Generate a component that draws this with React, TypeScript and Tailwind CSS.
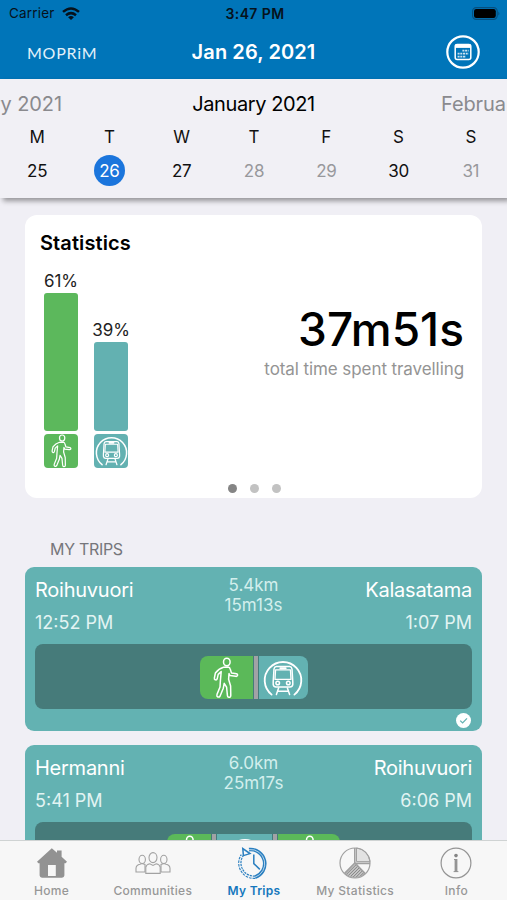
import { useState } from "react";
import clsx from "clsx";

const days = [
  { letter: "M", date: 25, active: true },
  { letter: "T", date: 26, active: true },
  { letter: "W", date: 27, active: true },
  { letter: "T", date: 28, active: false },
  { letter: "F", date: 29, active: false },
  { letter: "S", date: 30, active: true },
  { letter: "S", date: 31, active: false },
];

const stats = [
  { mode: "walk", percent: 61, height: 138 },
  { mode: "metro", percent: 39, height: 89 },
];

const trips = [
  {
    id: 1,
    from: "Roihuvuori",
    to: "Kalasatama",
    start: "12:52 PM",
    end: "1:07 PM",
    distance: "5.4km",
    duration: "15m13s",
    legs: [
      { mode: "walk", width: 53 },
      { mode: "metro", width: 49 },
    ],
  },
  {
    id: 2,
    from: "Hermanni",
    to: "Roihuvuori",
    start: "5:41 PM",
    end: "6:06 PM",
    distance: "6.0km",
    duration: "25m17s",
    legs: [
      { mode: "walk", width: 44 },
      { mode: "metro", width: 55 },
      { mode: "walk", width: 62 },
    ],
  },
];

function WalkIcon({ className }: { className?: string }) {
  return (
    <svg viewBox="0 0 26 42" className={className} fill="none" stroke="white" strokeWidth="1.5" strokeLinejoin="round" strokeLinecap="round">
      <ellipse cx="13.8" cy="5" rx="3.3" ry="3.8" />
      <path d="M10.5 10.2 L15 10 Q16.8 10.2 17.2 12 L18.5 16 L23.6 16.8 Q25 17.3 24.4 18.7 Q23.8 19.6 22.6 19.3 L17 18.6 L16 16.6 L15.6 22.2 L17.6 29 L17.8 38.5 Q17.6 40.6 15.8 40.3 Q14.4 40 14.4 38.4 L13.6 30.2 L11.2 26.4 L10.3 31.2 L7 39.2 Q6 40.6 4.6 39.8 Q3.4 39 4 37.4 L7 30 L7.4 23.6 L8.2 14.6 L5.2 17.4 L4.2 21.8 Q3.6 23.4 2.2 22.7 Q1.1 22.2 1.4 20.8 L2.4 16 Q5.6 11.6 10.5 10.2 Z" />
    </svg>
  );
}

function MetroIcon({ className }: { className?: string }) {
  return (
    <svg viewBox="0 0 40 36" className={className} fill="none" stroke="white" strokeWidth="1.5" strokeLinejoin="round" strokeLinecap="round">
      <path d="M8.6 34.6 A18.3 18.3 0 1 1 31.4 34.6" strokeWidth="1.8" />
      <path d="M13.2 6.6 H26.8 Q28.7 6.8 29 9 L29.8 22 V24.6 Q29.4 27 27 27 H13 Q10.6 27 10.2 24.6 V22 L11 9 Q11.3 6.8 13.2 6.6 Z" />
      <path d="M12.6 9.8 H27.4 L28 19.4 H12 Z" strokeWidth="1.3" />
      <path d="M17.4 8.2 H22.6" strokeWidth="2" />
      <circle cx="14.7" cy="23" r="1.8" />
      <circle cx="25.3" cy="23" r="1.8" />
      <path d="M15.6 28 L13.4 34.6 M24.4 28 L26.6 34.6 M15 31.2 H25" />
    </svg>
  );
}

function ModeIcon({ mode, small }: { mode: string; small?: boolean }) {
  if (mode === "walk") return <WalkIcon className={small ? "w-[21px] h-[34px]" : "w-[26px] h-[42px]"} />;
  return <MetroIcon className={small ? "w-[33px] h-[30px]" : "w-10 h-9"} />;
}

function StatusBar() {
  return (
    <div className="h-[27px] grid grid-cols-3 items-center pl-[9px] pr-[6px] text-[13.5px] text-[#06121c]">
      <div className="flex items-center gap-[7px]">
        <span className="tracking-[0.2px]">Carrier</span>
        <svg viewBox="0 0 18 13" className="w-[18px] h-[13px]" fill="none" stroke="#06121c" strokeWidth="2.5">
          <path d="M1 4.9 Q9 -2 17 4.9" />
          <path d="M4 8.2 Q9 4 14 8.2" />
          <path d="M9 13 L6.1 10.2 Q9 7.8 11.9 10.2 Z" fill="#06121c" stroke="none" />
        </svg>
      </div>
      <div className="text-center font-semibold text-[14px] tracking-[0.4px] whitespace-nowrap">3:47 PM</div>
      <svg viewBox="0 0 29 13" className="w-[29px] h-[13px] justify-self-end">
        <rect x="0.6" y="0.6" width="24.6" height="11.8" rx="3.6" fill="none" stroke="#064f7e" strokeWidth="1.1" />
        <rect x="2" y="2" width="21.8" height="9" rx="2.2" fill="#000" />
        <path d="M26.4 4.4 Q28.4 6.5 26.4 8.6 Z" fill="#064f7e" />
      </svg>
    </div>
  );
}

function Header() {
  return (
    <header className="h-[79px] shrink-0 bg-[#0075b9]">
      <StatusBar />
      <div className="h-[49px] grid grid-cols-3 items-center pl-[27px] pr-[27px] text-white">
        <div className="font-[Lato] text-[16px] tracking-[0.75px] leading-none pt-[3px] text-[#e3f1fa]">MOPRiM</div>
        <h1 className="text-center text-[20px] font-semibold whitespace-nowrap tracking-[0.1px] pt-px">Jan 26, 2021</h1>
        <svg viewBox="0 0 34 34" className="w-[34px] h-[34px] justify-self-end" fill="none" stroke="white">
          <circle cx="17" cy="17" r="15.7" strokeWidth="2.2" />
          <rect x="9.2" y="9.6" width="15.6" height="15" rx="2" strokeWidth="1.5" />
          <path d="M9 11.2 H25" strokeWidth="3.4" />
          <path d="M16.4 15.6 H22.6 M11.6 18.6 H22.6 M11.6 21.6 H20" strokeWidth="1.9" strokeDasharray="2 0.7" opacity="0.8" />
        </svg>
      </div>
    </header>
  );
}

function WeekCalendar({ selected, onSelect }: { selected: number; onSelect: (date: number) => void }) {
  return (
    <section className="relative z-10 h-[119px] shrink-0 bg-[#f1f0f5] shadow-[3px_3px_5px_rgba(0,0,0,0.38)]">
      <div className="h-[46px] pt-[4px] flex items-center justify-between overflow-hidden whitespace-nowrap text-[20px] tracking-[-0.4px] text-[#8a8a8e]">
        <div className="w-[66px] pr-1 flex justify-end tracking-[-0.1px]"><span>January 2021</span></div>
        <div className="text-black">January 2021</div>
        <div className="w-[66px] tracking-[-0.1px]">February 2021</div>
      </div>
      <div className="grid grid-cols-7 pl-px text-center text-[17px]">
        {days.map((day) => (
          <div key={day.date} className="flex flex-col items-center">
            <span className="h-6 leading-6 text-[#111]">{day.letter}</span>
            <button
              onClick={() => onSelect(day.date)}
              className={clsx(
                "mt-[6px] w-[31px] h-[31px] rounded-full leading-[32px] tracking-[-0.3px]",
                selected === day.date ? "bg-[#1b75dc] text-white" : day.active ? "text-[#111]" : "text-[#98989c]"
              )}
            >
              {day.date}
            </button>
          </div>
        ))}
      </div>
    </section>
  );
}

function Statistics() {
  return (
    <section className="mt-[17px] mx-[25px] w-[457px] h-[283px] shrink-0 rounded-[12px] bg-white flex flex-col">
      <h2 className="pl-[15px] pt-[15px] text-[20px] leading-[26px] font-semibold tracking-[0.1px]">Statistics</h2>
      <div className="flex justify-between h-[212px] pl-[14px] pr-[18px]">
        <div className="flex items-end gap-[6px]">
          {stats.map((s) => (
            <div key={s.mode} className="w-11 flex flex-col items-center">
              <span className="text-[17px] leading-6 tracking-[-0.1px] text-[#222]">{s.percent}%</span>
              <div
                className={clsx("w-[34px] rounded-[3px]", s.mode === "walk" ? "bg-[#5cb85c]" : "bg-[#63b1b1]")}
                style={{ height: s.height }}
              />
              <div className={clsx("mt-[3px] w-[34px] h-[34px] rounded-[4px] flex items-center justify-center", s.mode === "walk" ? "bg-[#5cb85c]" : "bg-[#63b1b1]")}>
                <ModeIcon mode={s.mode} small />
              </div>
            </div>
          ))}
        </div>
        <div className="pt-[46px] text-right">
          <div className="text-[46px] leading-[54px] font-medium">37m51s</div>
          <div className="mt-[2px] text-[17px] leading-[22px] tracking-[-0.08px] text-[#949494]">total time spent travelling</div>
        </div>
      </div>
      <div className="mt-[16px] pl-[2px] flex justify-center gap-[13px]">
        <span className="w-[9px] h-[9px] rounded-full bg-[#858585]" />
        <span className="w-[9px] h-[9px] rounded-full bg-[#c2c2c2]" />
        <span className="w-[9px] h-[9px] rounded-full bg-[#c2c2c2]" />
      </div>
    </section>
  );
}

function TripCard({ trip }: { trip: (typeof trips)[number] }) {
  return (
    <article className="h-[164px] shrink-0 rounded-[9px] bg-[#63b2b2] px-[10px]">
      <div className="h-[77px] grid grid-cols-3 text-[#e2f4f3]">
        <div className="pt-[9px]">
          <div className="text-[20px] leading-[28px] tracking-[-0.25px] text-white">{trip.from}</div>
          <div className="mt-[6px] text-[18px] leading-[26px]">{trip.start}</div>
        </div>
        <div className="pt-2 text-center text-[17px] leading-[20px] text-[#d3efed]">
          <div>{trip.distance}</div>
          <div>{trip.duration}</div>
        </div>
        <div className="pt-[9px] text-right">
          <div className="text-[20px] leading-[28px] tracking-[-0.25px] text-white">{trip.to}</div>
          <div className="mt-[6px] text-[18px] leading-[26px]">{trip.end}</div>
        </div>
      </div>
      <div className="h-[65px] rounded-[8px] bg-[#467b7a] flex items-center justify-center pt-[2px]">
        <div className="flex h-[43px] rounded-[8px] overflow-hidden">
          {trip.legs.map((leg, i) => (
            <div key={i} className="flex">
              {i > 0 && <div className="w-1 mx-[1px] bg-[#a2a2a5]" />}
              <div
                className={clsx("flex items-center justify-center overflow-hidden", leg.mode === "walk" ? "bg-[#5bb959]" : "bg-[#63b2b2]")}
                style={{ width: leg.width }}
              >
                <ModeIcon mode={leg.mode} />
              </div>
            </div>
          ))}
        </div>
      </div>
      <svg viewBox="0 0 15 15" className="ml-auto mr-px mt-[4px] w-[15px] h-[15px]">
        <circle cx="7.5" cy="7.5" r="7.5" fill="white" />
        <path d="M4.2 7.6 L6.6 9.9 L11 5.4" fill="none" stroke="#63b2b2" strokeWidth="1.3" />
      </svg>
    </article>
  );
}

function HomeIcon() {
  return (
    <svg viewBox="0 0 30 30" className="w-[30px] h-[30px]" fill="#929292">
      <path d="M14.8 0.2 L20 4.7 V2.4 H24.6 V8.8 L30 13.8 L28.6 15.2 H27.4 V27.5 Q27.2 29.6 25 29.8 H5 Q2.8 29.6 2.6 27.5 V15.2 H1.4 L0 13.8 Z M11 17 V28 H18.8 V17 Z" fillRule="evenodd" />
    </svg>
  );
}

function CommunitiesIcon() {
  return (
    <svg viewBox="0 0 36 22" className="w-9 h-[22px]" fill="#f7f7f7" stroke="#a2a2a2" strokeWidth="1.1">
      <path d="M1 20 V16.2 Q1.2 12.8 5 12.2 L7 11.4 L10 12.4 V20 Z" />
      <path d="M35 20 V16.2 Q34.8 12.8 31 12.2 L29 11.4 L26 12.4 V20 Z" />
      <ellipse cx="7.2" cy="7.4" rx="3.2" ry="4.1" />
      <ellipse cx="28.8" cy="7.4" rx="3.2" ry="4.1" />
      <path d="M10.8 21.4 V15.2 Q11.2 12.6 14.8 11.8 L18 13.5 L21.2 11.8 Q24.8 12.6 25.2 15.2 V21.4 Z" />
      <ellipse cx="18" cy="5.6" rx="4" ry="5" />
    </svg>
  );
}

function TripsIcon() {
  return (
    <svg viewBox="0 0 32 32" className="w-8 h-8" fill="none" stroke="#2a7fc0">
      <path d="M11 2.6 A14.2 14.2 0 0 1 17 30.2" strokeWidth="3.6" />
      <path d="M11 2.6 A14.2 14.2 0 0 1 17 30.2" strokeWidth="0.8" stroke="#d8e8f4" />
      <path d="M17 30.2 A14.2 14.2 0 0 1 4.2 8.2" strokeWidth="3.4" strokeDasharray="2.4 0.9" />
      <path d="M17 30.2 A14.2 14.2 0 0 1 4.2 8.2" strokeWidth="1.1" stroke="#f7f7f7" />
      <path d="M4.8 1.6 L5.4 8.6 L12 6.6 Z" strokeWidth="1.5" fill="#f7f7f7" />
      <path d="M15.8 7.4 V16.6 L21.8 22.4" strokeWidth="1.5" />
    </svg>
  );
}

function PieIcon() {
  return (
    <svg viewBox="0 0 32 32" className="w-8 h-8" fill="none" stroke="#a0a0a0">
      <defs>
        <pattern id="hatch" width="2.2" height="2.2" patternUnits="userSpaceOnUse" patternTransform="rotate(45)">
          <rect width="2.2" height="2.2" fill="#c8c8c8" stroke="none" />
          <path d="M0 0 V2.2" stroke="#868686" strokeWidth="1.6" />
        </pattern>
      </defs>
      <path d="M16 16 L26 26.6 A15 15 0 0 1 6 26.6 Z" fill="url(#hatch)" strokeWidth="0.8" />
      <path d="M17.5 1 A15 15 0 0 1 31 14.6 H17.5 Z" fill="#e2e2e2" strokeWidth="1" />
      <circle cx="16" cy="16" r="15" strokeWidth="1.2" />
      <path d="M15.8 1 V16 L5.6 26.4 M16 16.4 H31 M16 16 L26.4 26.8" strokeWidth="1.6" />
    </svg>
  );
}

function InfoIcon() {
  return (
    <svg viewBox="0 0 32 32" className="w-8 h-8" fill="none" stroke="#949494">
      <circle cx="16" cy="16" r="14.9" strokeWidth="1.2" />
      <circle cx="16" cy="8.6" r="1.8" fill="#858585" stroke="none" />
      <path d="M16 12 V25" strokeWidth="2.8" />
      <path d="M14 12.5 H16 M13.6 24.6 H18.4" strokeWidth="1" />
    </svg>
  );
}

const tabs = [
  { label: "Home", icon: HomeIcon },
  { label: "Communities", icon: CommunitiesIcon },
  { label: "My Trips", icon: TripsIcon },
  { label: "My Statistics", icon: PieIcon },
  { label: "Info", icon: InfoIcon },
];

function TabBar() {
  return (
    <nav className="relative z-10 h-[60px] shrink-0 border-t border-[#cfd3d3] bg-[#f7f7f7] pl-px grid grid-cols-5">
      {tabs.map(({ label, icon: Icon }) => (
        <button key={label} className="flex flex-col items-center">
          <span className="mt-[6px] h-8 flex items-center justify-center"><Icon /></span>
          <span className={clsx("mt-[4px] text-[12px] leading-4 tracking-[0.3px] whitespace-nowrap", label === "My Trips" ? "font-semibold text-[#1577bd]" : "font-medium text-[#979797]")}>
            {label}
          </span>
        </button>
      ))}
    </nav>
  );
}

export default function App() {
  const [selected, setSelected] = useState(26);

  return (
    <div className="w-[507px] h-[900px] flex flex-col overflow-hidden bg-[#f0eff5] text-black font-[Inter,sans-serif]">
      <Header />
      <WeekCalendar selected={selected} onSelect={setSelected} />
      <main className="flex-1 min-h-0 overflow-hidden flex flex-col">
        <Statistics />
        <h3 className="mt-[41px] ml-[50px] text-[16px] leading-5 tracking-[-0.3px] text-[#76767b]">MY TRIPS</h3>
        <div className="mt-[8px] mx-[25px] w-[457px] flex flex-col gap-[14px]">
          {trips.map((trip) => (
            <TripCard key={trip.id} trip={trip} />
          ))}
        </div>
      </main>
      <TabBar />
    </div>
  );
}
